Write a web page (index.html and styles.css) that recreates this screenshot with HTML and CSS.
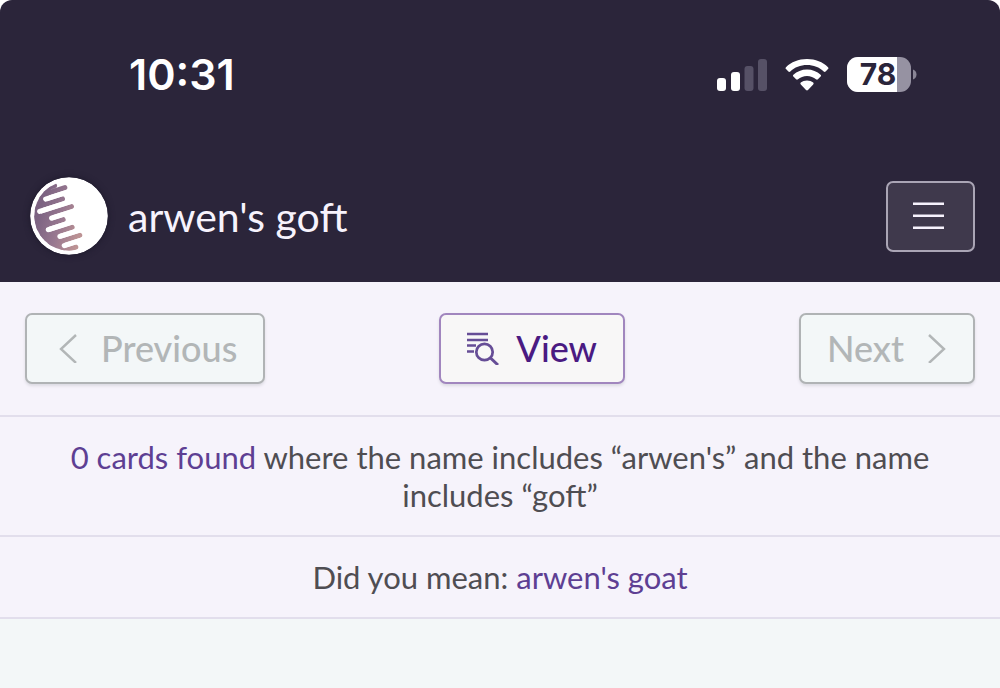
FILE: index.html
```
<!DOCTYPE html>
<html lang="en">
<head>
<meta charset="utf-8">
<meta name="viewport" content="width=device-width, initial-scale=1">
<title>arwen's goft</title>
<link rel="stylesheet" href="styles.css">
</head>
<body>
<header class="top">
  <div class="status">
    <time class="clock">10:31</time>
    <div class="indicators">
      <svg class="signal" width="50" height="32" viewBox="0 0 50 32" aria-hidden="true">
        <g fill="#fff"><rect x="0" y="19" width="9" height="13" rx="3"/><rect x="14" y="13" width="9" height="19" rx="3"/></g>
        <g fill="#565166"><rect x="27.500" y="7" width="9" height="25" rx="3"/><rect x="41" y="0" width="9" height="32" rx="3"/></g>
      </svg>
      <svg class="wifi" width="44" height="34" viewBox="0 0 44 34" fill="#fff" aria-hidden="true">
        <path d="M22 1C13.500 1 6.200 4 1 9.200c-.6.6-.6 1.300 0 1.900l2.400 2.500c.6.6 1.300.6 1.900 0C9.500 9.300 15.500 7 22 7s12.500 2.300 16.700 6.600c.6.6 1.300.6 1.900 0l2.400-2.500c.6-.6.6-1.300 0-1.900C37.800 4 30.500 1 22 1Z"/>
        <path d="M22 11.500c-5.300 0-10.100 2-13.600 5.200-.6.6-.6 1.300 0 1.900l2.700 2.700c.6.6 1.200.6 1.900 0 2.300-2.100 5.500-3.400 9-3.400s6.700 1.300 9 3.400c.7.6 1.300.6 1.900 0l2.700-2.700c.6-.6.6-1.300 0-1.900-3.500-3.200-8.300-5.200-13.600-5.200Z"/>
        <path d="M22 22.500c-2.500 0-4.600.8-6.200 2.100-.6.5-.6 1.200 0 1.800l5.200 5.700c.6.6 1.400.6 2 0l5.200-5.700c.6-.6.6-1.300 0-1.800-1.600-1.300-3.700-2.100-6.200-2.100Z"/>
      </svg>
      <svg class="battery" width="70" height="36" viewBox="0 0 70 36" role="img" aria-label="Battery 78%">
        <defs><clipPath id="cell"><rect x="0" y="0" width="64" height="35" rx="11"/></clipPath></defs>
        <g clip-path="url(#cell)"><rect width="64" height="35" fill="#9692a2"/><rect width="50" height="35" fill="#fff"/></g>
        <path d="M66 12.500c2 .8 3.500 2.500 3.500 5s-1.500 4.200-3.500 5Z" fill="#8a8696"/>
        <text class="charge" x="31" y="28" text-anchor="middle">78</text>
      </svg>
    </div>
  </div>
  <div class="searchbar">
    <a class="home" href="#" aria-label="Home">
      <svg width="78" height="78" viewBox="29 22 235 235" aria-hidden="true">
        <defs>
          <linearGradient id="dusk" gradientUnits="userSpaceOnUse" x1="50" y1="150" x2="180" y2="190"><stop offset="0" stop-color="#7c6382"/><stop offset=".5" stop-color="#987890"/><stop offset="1" stop-color="#bd9394"/></linearGradient>
          <clipPath id="disc"><circle cx="147" cy="139" r="105"/></clipPath>
        </defs>
        <circle cx="146.500" cy="139.500" r="117" fill="#fff"/>
        <g clip-path="url(#disc)" stroke-width="15" stroke-linecap="round" fill="none">
          <path fill="url(#dusk)" d="M0 60L95 50L80 97L62 120V134L96 138V153L86 172V188L121 195V208L134 220V250H0Z"/>
          <path stroke="url(#dusk)" d="M0 81L103 48M0 97L134 54M0 128.600L127 88M0 160.200L154 110.900M0 191.800L129 150.500M0 223.400L156 173.500M0 255L179 197.700M0 286.600L167 233.200"/>
          <path stroke="#fff" d="M76 88.500L220 42.400M58 125.800L220 74M94 145.900L220 105.600M84 180.700L220 137.200M119 201.100L220 168.800M132 228.600L220 200.400"/>
        </g>
      </svg>
    </a>
    <input class="query" type="text" value="arwen's goft" aria-label="Search">
    <button class="menu" type="button" aria-label="Menu">
      <svg width="31" height="28" viewBox="0 0 31 28" fill="#f7f3fd" aria-hidden="true"><path d="M0 .5h31V3H0zM0 12.500h31V15H0zM0 24.500h31V27H0z"/></svg>
    </button>
  </div>
</header>
<main>
  <nav class="pager" aria-label="Results">
    <button class="btn" type="button" disabled>
      <svg width="30" height="30" viewBox="0 0 30 30" fill="none" stroke="currentColor" stroke-width="2.400" aria-hidden="true"><path d="M23 2L8 16L23 30"/></svg>Previous</button>
    <button class="btn view" type="button">
      <svg width="33" height="34" viewBox="0 0 33 34" fill="none" stroke="#664d96" stroke-width="2.300" aria-hidden="true"><path d="M0 3H21M0 9H21M0 14.500H9M0 20.500H7"/><circle cx="17.500" cy="21" r="8.200" stroke-width="2.700"/><path d="M23.500 27L31 34" stroke-width="3"/></svg>View</button>
    <button class="btn" type="button" disabled>Next
      <svg width="25" height="30" viewBox="0 0 25 30" fill="none" stroke="currentColor" stroke-width="2.400" aria-hidden="true"><path d="M7 2L22 16L7 30"/></svg></button>
  </nav>
  <p class="info"><a href="#">0 cards found</a> where the name includes “arwen's” and the name includes “goft”</p>
  <p class="info">Did you mean: <a href="#">arwen's goat</a></p>
</main>
</body>
</html>
```
FILE: styles.css
```
* { box-sizing: border-box; }
html { background: #fff; }
body {
  margin: 0;
  min-height: 100vh;
  background: linear-gradient(#fff 0 40px, #f3f7f8 40px);
  font-family: Lato, "Open Sans", sans-serif;
  color: #4f4d52;
}
.top {
  background: #2b253a;
  border-radius: 12px 12px 0 0;
  color: #fff;
}
.status {
  display: flex;
  align-items: center;
  justify-content: space-between;
  height: 150px;
  padding: 0 83px 0 129px;
}
.clock { padding-bottom: 2px; font: 600 43px/1 Inter, sans-serif; }
.indicators { display: flex; align-items: center; gap: 18px; }
.battery { overflow: visible; }
.charge { font: 700 30px Inter, sans-serif; fill: #2b253a; }
.searchbar {
  display: flex;
  align-items: center;
  height: 132px;
  padding: 0 25px 0 30px;
}
.home, .home svg { display: block; border-radius: 50%; }
.home { box-shadow: 0 0 6px #1d192b; }
.query {
  flex: 1;
  min-width: 0;
  margin: 0 20px;
  padding: 1px 0 0;
  border: 0;
  outline: 0;
  background: none;
  color: #f7f3fd;
  font: 41px/48px Lato, sans-serif;
}
.menu {
  display: flex;
  align-items: center;
  justify-content: center;
  width: 89px;
  height: 71px;
  padding: 0 5px 0 0;
  border: 2px solid #aaa5b5;
  border-radius: 7px;
  background: #3f394c;
}
.pager, .info {
  margin: 0;
  background: #f6f3fb;
  border-bottom: 2px solid #e2deec;
}
.pager {
  display: flex;
  align-items: center;
  justify-content: space-between;
  padding: 31px 25px;
}
.btn {
  display: flex;
  align-items: center;
  gap: 18px;
  height: 71px;
  padding: 0 26px 2px;
  border: 2px solid #b0b3b5;
  border-radius: 7px;
  background: #f3f7f8;
  box-shadow: 0 2px 3px #dcdae2;
  color: #b2b6b7;
  font: 500 36px/44px Lato, sans-serif;
}
.view {
  gap: 16px;
  border-color: #a186be;
  background: #f8f7f7;
  color: #4a1a82;
}
.info {
  padding: 21px 60px;
  font-size: 31px;
  line-height: 38px;
  text-align: center;
}
.info a { color: #5e3f93; text-decoration: none; }
```
